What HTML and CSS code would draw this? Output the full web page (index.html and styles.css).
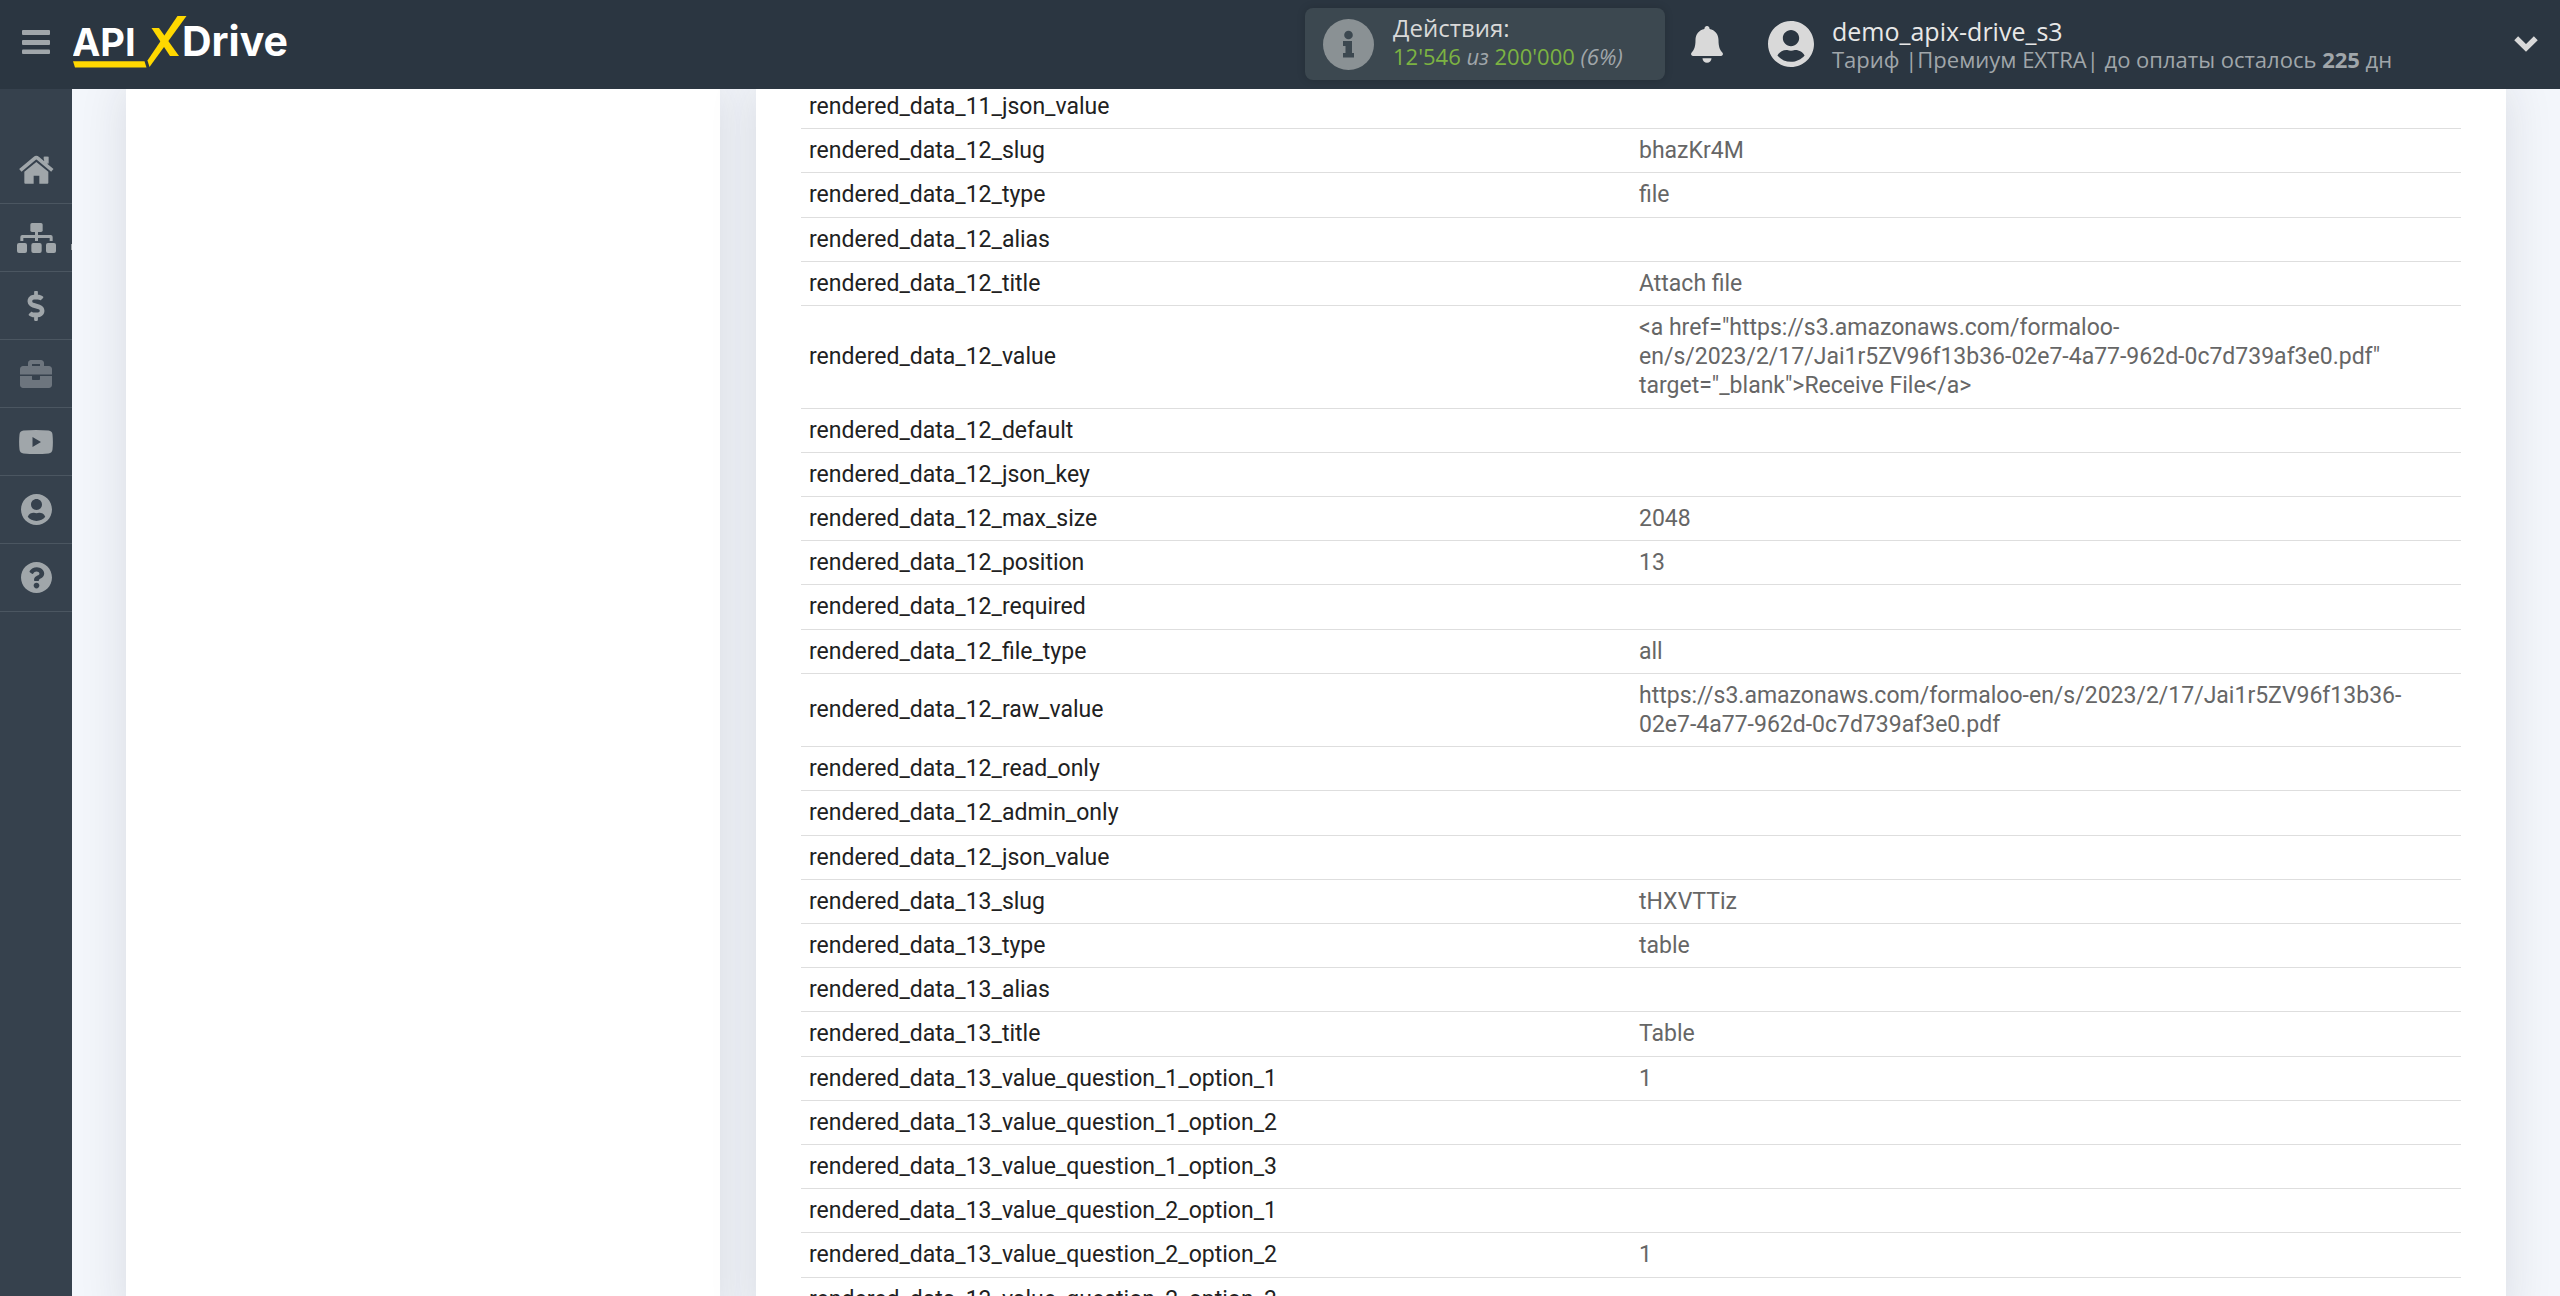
FILE: index.html
```html
<!DOCTYPE html>
<html lang="ru">
<head>
<meta charset="utf-8">
<meta name="viewport" content="width=device-width, initial-scale=1">
<title>ApiX-Drive</title>
<link rel="stylesheet" href="styles.css">
</head>
<body>
<header class="topbar">
  <button class="menu-toggle" type="button" aria-label="Меню">
    <svg width="28" height="24" viewBox="0 0 28 24" fill="currentColor"><rect width="28" height="5" rx="1"/><rect y="10" width="28" height="5" rx="1"/><rect y="19.500" width="28" height="4.500" rx="1"/></svg>
  </button>
  <a class="logo" href="#" aria-label="APIXDrive">
    <svg width="222" height="56" viewBox="0 0 222 56">
      <g class="logo-word"><text class="logo-api" x="-1" y="42">API</text><text class="logo-drive" x="109" y="42">Drive</text></g>
      <g fill="#ffd800"><path d="M0 47.300H71.500L73.500 53.500H2z"/><path d="M104.500 2H113.500L76.500 53 74.500 46.500z"/><path d="M78.500 14H86L106 42H97z"/></g>
    </svg>
  </a>
  <a class="usage" href="#">
    <svg width="51" height="51" viewBox="0 0 51 51"><circle cx="25.500" cy="25.500" r="25.500" fill="#8a9194"/><g fill="#3c4850"><circle cx="25.500" cy="16" r="4.300"/><path d="M20 22H29V34H31V38.500H20V34H22.500V27H20z"/></g></svg>
    <span class="usage-text">
      <span class="usage-title">Действия:</span>
      <span class="usage-count">12'546 <i>из</i> 200'000 <i>(6%)</i></span>
    </span>
  </a>
  <button class="bell" type="button" aria-label="Уведомления">
    <svg width="32" height="37" viewBox="0 0 32 37" fill="currentColor"><path d="M16 0a2.500 2.500 0 0 1 2.500 3C24 4 27.500 8.500 27.500 14c0 7 1.500 10 3.800 12.500 1.300 1.500.5 3.500-1.300 3.500H2c-1.800 0-2.600-2-1.300-3.500C3 24 4.500 21 4.500 14 4.500 8.500 8 4 13.500 3A2.500 2.500 0 0 1 16 0zM11.500 32.300h9a4.500 4.500 0 0 1-9 0z"/></svg>
  </button>
  <button class="profile" type="button">
    <svg width="46" height="46" viewBox="0 0 496 496" fill="currentColor"><path fill-rule="evenodd" d="M248 0C111 0 0 111 0 248s111 248 248 248 248-111 248-248S385 0 248 0zm0 96c48.600 0 88 39.400 88 88s-39.400 88-88 88-88-39.400-88-88 39.400-88 88-88zm0 344c-58.700 0-111.300-26.600-146.500-68.200 18.800-35.400 55.600-59.800 98.500-59.800 2.400 0 4.800.4 7.100 1.100 13 4.200 26.600 6.900 40.900 6.900s28-2.700 40.900-6.900c2.300-.7 4.700-1.100 7.100-1.100 42.900 0 79.700 24.400 98.500 59.800C359.300 413.400 306.700 440 248 440z"/></svg>
    <span class="profile-text">
      <span class="profile-name">demo_apix-drive_s3</span>
      <span class="profile-plan">Тариф |Премиум EXTRA| до оплаты осталось <b>225</b> дн</span>
    </span>
    <svg width="24" height="16" viewBox="0 0 24 16" fill="none" stroke="currentColor" stroke-width="5.500"><path d="M2.200 2.300L12 12 21.800 2.300"/></svg>
  </button>
</header>
<div class="shell">
  <nav class="sidebar">
    <a href="#" aria-label="Главная"><svg width="39" height="30" viewBox="51 76 117 90"><path d="M73 126L109 97 145 126V159Q145 162 142 162H118V138H101V162H76Q73 162 73 159zM131 81H146V108L131 96z" fill="currentColor"/><path d="M61 122L104 86Q109 82 114 86L157 122" fill="none" stroke="#36414d" stroke-width="17"/><path d="M61 122L104 86Q109 82 114 86L157 122M138 81V102" fill="none" stroke="currentColor" stroke-width="11"/></svg></a>
    <a class="has-sub" href="#" aria-label="Связи"><svg width="39" height="30" viewBox="51 279 117 90" fill="currentColor"><rect x="91" y="279" width="37" height="27" rx="5"/><rect x="51" y="339" width="30" height="30" rx="6"/><rect x="94" y="339" width="31" height="30" rx="6"/><rect x="138" y="339" width="30" height="30" rx="6"/><path d="M105 304H114V315H152Q158 315 158 321V333H149V324H114V333H105V324H70V333H61V321Q61 315 67 315H105z"/></svg></a>
    <a href="#" aria-label="Оплата"><svg width="18" height="30" viewBox="0 0 288 512" fill="currentColor"><path d="M209.200 233.400l-108-31.600C88.700 198.200 80 186.500 80 173.500c0-16.300 13.200-29.500 29.500-29.500h66.300c12.200 0 24.200 3.700 34.200 10.500 6.100 4.100 14.300 3.100 19.500-2l34.800-34c7.100-6.900 6.100-18.400-1.800-24.500C238 74.800 207.400 64.100 176 64V16c0-8.800-7.200-16-16-16h-32c-8.800 0-16 7.200-16 16v48h-2.500C45.800 64-5.400 118.700.5 183.600c4.200 46.100 39.400 83.600 83.800 96.600l102.500 30c12.500 3.700 21.200 15.300 21.200 28.300 0 16.300-13.200 29.500-29.500 29.500h-66.300C100 368 88 364.300 78 357.500c-6.100-4.100-14.300-3.100-19.500 2l-34.800 34c-7.100 6.900-6.100 18.400 1.800 24.500 24.500 19.200 55.100 29.900 86.500 30v48c0 8.800 7.200 16 16 16h32c8.800 0 16-7.200 16-16v-48.200c46.600-.9 90.300-28.600 105.700-72.700 21.500-61.600-14.600-124.800-72.500-141.700z"/></svg></a>
    <a class="muted" href="#" aria-label="Партнёрам"><svg width="32" height="28" viewBox="0 32 512 448" fill="currentColor"><path fill-rule="evenodd" d="M320 336c0 8.800-7.200 16-16 16h-96c-8.800 0-16-7.200-16-16v-48H0v144c0 25.600 22.400 48 48 48h416c25.600 0 48-22.400 48-48V288H320v48zM464 128h-80V80c0-25.600-22.400-48-48-48H176c-25.600 0-48 22.400-48 48v48H48c-25.600 0-48 22.400-48 48v88h512v-88c0-25.600-22.400-48-48-48zm-144 0H192V96h128v32z"/></svg></a>
    <a href="#" aria-label="Видео"><svg width="34" height="24" viewBox="0 0 34 24" fill="currentColor"><path fill-rule="evenodd" d="M4.500.6Q17-.5 29.500.6 33.200 1 33.500 4.500 34.300 12 33.500 19.500 33.200 23 29.500 23.400 17 24.500 4.500 23.400.8 23 .5 19.500-.3 12 .5 4.500.8 1 4.500.6zM13.500 7V17L22 12z"/></svg></a>
    <a href="#" aria-label="Профиль"><svg width="31" height="31" viewBox="0 0 496 496" fill="currentColor"><path fill-rule="evenodd" d="M248 0C111 0 0 111 0 248s111 248 248 248 248-111 248-248S385 0 248 0zm0 80c48.600 0 88 39.400 88 88s-39.400 88-88 88-88-39.400-88-88 39.400-88 88-88zm0 350c-58.700 0-111.300-26-140-66 18.800-50 60-64 92-64 2.400 0 4.800.4 7.100 1.100 13 4.200 26.600 6.900 40.900 6.900s28-2.700 40.900-6.900c2.300-.7 4.700-1.100 7.100-1.100 32 0 73 14 92 64C359.300 404 306.700 430 248 430z"/></svg></a>
    <a href="#" aria-label="Помощь"><svg width="31" height="31" viewBox="8 8 496 496" fill="currentColor"><path d="M504 256c0 137-111 248-248 248S8 393 8 256C8 119.100 119 8 256 8s248 111.100 248 248zM262.700 90c-54.500 0-89.300 23-116.500 63.800-3.500 5.300-2.400 12.400 2.700 16.300l34.700 26.300c5.200 3.900 12.600 3 16.700-2.100 17.900-22.700 30.100-35.800 57.300-35.800 20.400 0 45.700 13.100 45.700 33 0 15-12.400 22.700-32.500 34C247.100 238.500 216 254.900 216 296v4c0 6.600 5.400 12 12 12h56c6.600 0 12-5.400 12-12v-1.300c0-28.500 83.200-29.600 83.200-106.700 0-58-60.200-102-116.500-102zM256 338c-25.400 0-46 20.600-46 46 0 25.400 20.600 46 46 46s46-20.600 46-46c0-25.400-20.600-46-46-46z"/></svg></a>
  </nav>
  <main class="content">
    <aside class="card"></aside>
    <section class="card card-data">
      <table class="fields">
        <tbody>
          <tr><th scope="row">rendered_data_11_json_value</th><td></td></tr>
          <tr><th scope="row">rendered_data_12_slug</th><td>bhazKr4M</td></tr>
          <tr><th scope="row">rendered_data_12_type</th><td>file</td></tr>
          <tr><th scope="row">rendered_data_12_alias</th><td></td></tr>
          <tr><th scope="row">rendered_data_12_title</th><td>Attach file</td></tr>
          <tr><th scope="row">rendered_data_12_value</th><td>&lt;a href="https://s3.amazonaws.com/formaloo-<wbr>en/s/2023/2/17/Jai1r5ZV96f13b36-02e7-4a77-962d-0c7d739af3e0.pdf" target="_blank"&gt;Receive File&lt;/a&gt;</td></tr>
          <tr><th scope="row">rendered_data_12_default</th><td></td></tr>
          <tr><th scope="row">rendered_data_12_json_key</th><td></td></tr>
          <tr><th scope="row">rendered_data_12_max_size</th><td>2048</td></tr>
          <tr><th scope="row">rendered_data_12_position</th><td>13</td></tr>
          <tr><th scope="row">rendered_data_12_required</th><td></td></tr>
          <tr><th scope="row">rendered_data_12_file_type</th><td>all</td></tr>
          <tr><th scope="row">rendered_data_12_raw_value</th><td>https://s3.amazonaws.com/formaloo-en/s/2023/2/17/Jai1r5ZV96f13b36-02e7-4a77-962d-0c7d739af3e0.pdf</td></tr>
          <tr><th scope="row">rendered_data_12_read_only</th><td></td></tr>
          <tr><th scope="row">rendered_data_12_admin_only</th><td></td></tr>
          <tr><th scope="row">rendered_data_12_json_value</th><td></td></tr>
          <tr><th scope="row">rendered_data_13_slug</th><td>tHXVTTiz</td></tr>
          <tr><th scope="row">rendered_data_13_type</th><td>table</td></tr>
          <tr><th scope="row">rendered_data_13_alias</th><td></td></tr>
          <tr><th scope="row">rendered_data_13_title</th><td>Table</td></tr>
          <tr><th scope="row">rendered_data_13_value_question_1_option_1</th><td>1</td></tr>
          <tr><th scope="row">rendered_data_13_value_question_1_option_2</th><td></td></tr>
          <tr><th scope="row">rendered_data_13_value_question_1_option_3</th><td></td></tr>
          <tr><th scope="row">rendered_data_13_value_question_2_option_1</th><td></td></tr>
          <tr><th scope="row">rendered_data_13_value_question_2_option_2</th><td>1</td></tr>
          <tr><th scope="row">rendered_data_13_value_question_2_option_3</th><td></td></tr>
        </tbody>
      </table>
    </section>
  </main>
</div>
</body>
</html>
```
FILE: styles.css
```css
* {
  box-sizing: border-box;
}

body {
  margin: 0;
  height: 100vh;
  display: flex;
  flex-direction: column;
  overflow: hidden;
  background: #f3f6fb;
  font-family: Roboto, sans-serif;
  font-size: 23px;
}

svg {
  display: block;
  flex: none;
}

button {
  border: 0;
  padding: 0;
  background: none;
  font: inherit;
  text-align: left;
  cursor: pointer;
}

/* Top bar */
.topbar {
  position: relative;
  z-index: 2;
  flex: none;
  display: flex;
  align-items: center;
  height: 89px;
  padding: 0 22px 1px;
  background: #2b3641;
  color: #d9d9d9;
  font-family: "Open Sans", "Noto Sans", sans-serif;
}

.menu-toggle,
.logo {
  margin-bottom: 4px;
}

.menu-toggle {
  color: #a0a6aa;
  margin-right: 23px;
}

.logo-word {
  fill: #fff;
  font-family: Inter, sans-serif;
  font-weight: 700;
}

.logo-api {
  font-size: 38px;
}

.logo-drive {
  font-size: 41px;
}

.usage {
  display: flex;
  align-items: center;
  gap: 19px;
  width: 360px;
  height: 72px;
  margin-left: auto;
  padding: 0 18px;
  border-radius: 8px;
  background: #3c4850;
  box-shadow: 0 0 8px rgba(0, 0, 0, 0.15);
  color: inherit;
  text-decoration: none;
}

.usage-text,
.profile-text {
  display: flex;
  flex-direction: column;
  white-space: nowrap;
}

.usage-text {
  padding-bottom: 4px;
}

.usage-title {
  font-size: 24px;
  line-height: 28px;
}

.usage-count {
  font-size: 22px;
  line-height: 28px;
  color: #7cb342;
}

.usage-count i {
  color: #a0a6aa;
}

.bell {
  margin: 0 45px 0 26px;
  color: #d9d9d9;
}

.profile {
  flex: 0 0 770px;
  display: flex;
  align-items: center;
  gap: 18px;
  color: #d9d9d9;
}

.profile-text {
  flex: 1;
  padding-top: 2px;
}

.profile-name {
  font-size: 25px;
  line-height: 28px;
  color: #e8e8e8;
}

.profile-plan {
  font-size: 22px;
  line-height: 28px;
  color: #a0a6aa;
}

/* Side navigation */
.shell {
  flex: 1;
  min-height: 0;
  display: flex;
}

.sidebar {
  flex: 0 0 72px;
  padding-top: 47px;
  background: #36414d;
}

.sidebar a {
  position: relative;
  display: flex;
  align-items: center;
  justify-content: center;
  height: 68px;
  border-bottom: 1px solid #4b5661;
  color: #a0a6aa;
}

.sidebar .muted {
  color: #6d757e;
}

.sidebar .has-sub::after {
  content: "";
  position: absolute;
  right: 0;
  bottom: 21px;
  width: 1px;
  height: 6px;
  background: #a0a6aa;
}

/* Content */
.content {
  flex: 1;
  display: grid;
  grid-template-columns: 594fr 1750fr;
  gap: 36px;
  margin-top: -4px;
  padding: 0 54px;
}

.card {
  background: #fff;
  box-shadow: 0 0 45px rgba(30, 35, 50, 0.12);
}

.card-data {
  padding: 0 45px;
}

.fields {
  width: 100%;
  table-layout: fixed;
  border-collapse: separate;
  border-spacing: 0;
  line-height: 1.27;
}

.fields th,
.fields td {
  padding: 7px 8px;
  border-bottom: 1px solid #dedede;
  text-align: left;
  vertical-align: middle;
  font-weight: 400;
}

.fields th {
  color: #212121;
}

.fields td {
  color: #666;
}
```
